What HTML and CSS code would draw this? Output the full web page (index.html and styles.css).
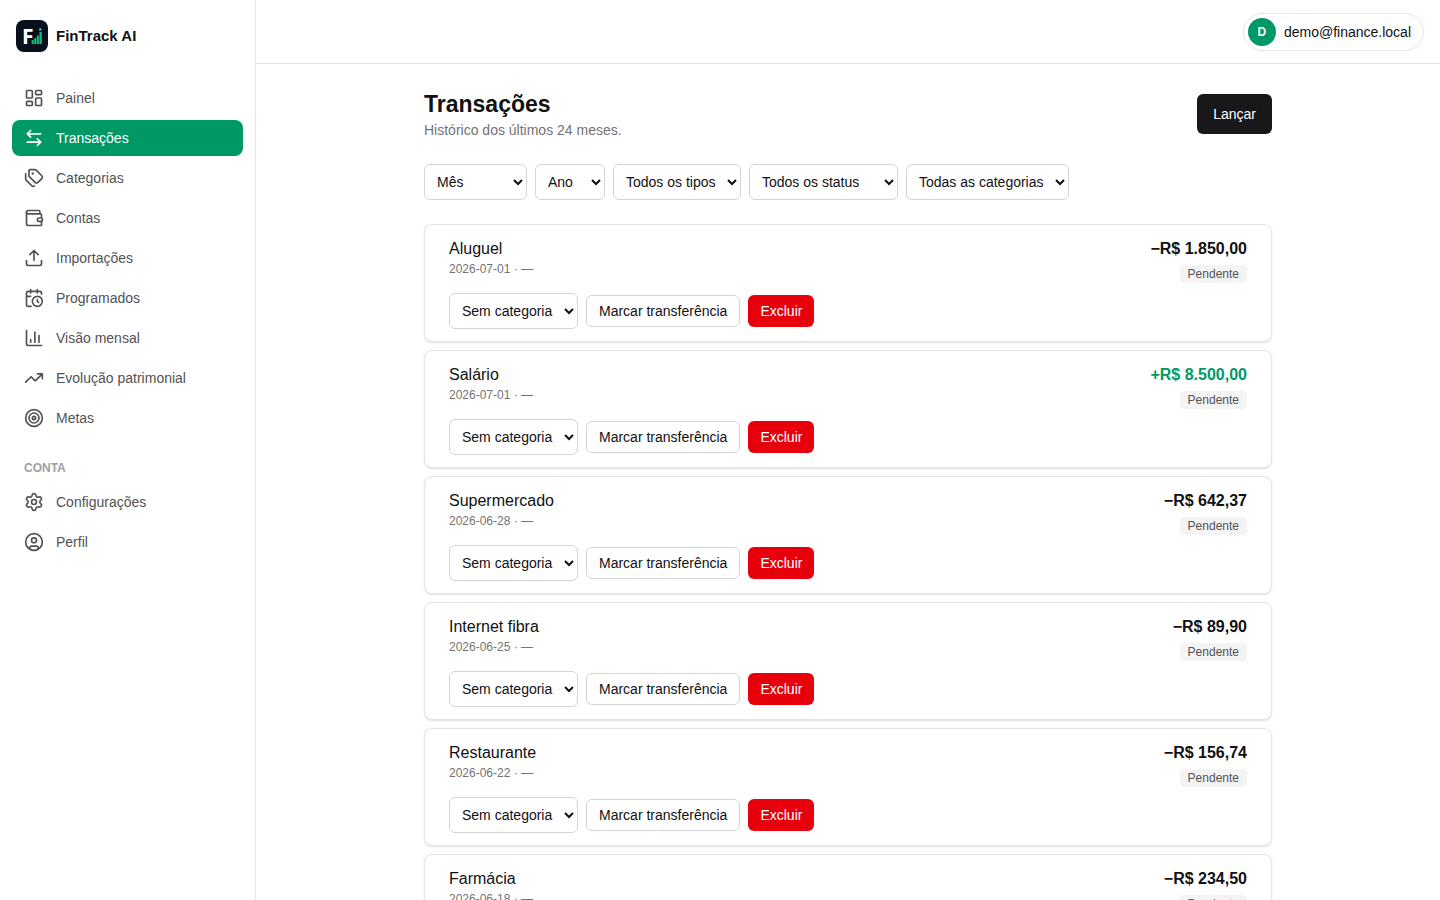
FILE: index.html
```html
<!DOCTYPE html>
<html lang="pt-BR">
<head>
<meta charset="utf-8">
<meta name="viewport" content="width=device-width, initial-scale=1">
<title>Transações · FinTrack AI</title>
<link rel="stylesheet" href="styles.css">
</head>
<body>
<div class="shell">
  <aside class="sidebar">
    <a class="brand" href="#">
      <svg class="logo" viewBox="0 0 32 32" aria-hidden="true">
        <rect width="32" height="32" rx="8" fill="#07101c"/>
        <text class="logo-letter" x="6" y="24">F</text>
        <g fill="#16b981">
          <rect x="15.600" y="20" width="2" height="4" rx=".5"/>
          <rect x="18.200" y="18" width="2.200" height="6" rx=".5"/>
          <rect x="20.900" y="15.500" width="2" height="8.500" rx=".5"/>
          <rect x="23.400" y="12" width="2.400" height="12" rx=".5"/>
          <circle cx="24.300" cy="9.500" r="1.300" fill="#3ccf9a"/>
        </g>
      </svg>
      <span>FinTrack AI</span>
    </a>
    <nav class="nav">
      <a class="nav-link" href="#"><svg class="icon" viewBox="0 0 24 24"><rect x="3" y="3" width="7" height="9" rx="1"/><rect x="14" y="3" width="7" height="5" rx="1"/><rect x="14" y="12" width="7" height="9" rx="1"/><rect x="3" y="16" width="7" height="5" rx="1"/></svg>Painel</a>
      <a class="nav-link active" href="#" aria-current="page"><svg class="icon" viewBox="0 0 24 24"><path d="M8 3 4 7l4 4M4 7h16M16 21l4-4-4-4M20 17H4"/></svg>Transações</a>
      <a class="nav-link" href="#"><svg class="icon" viewBox="0 0 24 24"><path d="M13.172 2a2 2 0 0 1 1.414.586l6.71 6.71a2.4 2.4 0 0 1 0 3.408l-4.592 4.592a2.4 2.4 0 0 1-3.408 0l-6.71-6.71A2 2 0 0 1 6 9.172V3a1 1 0 0 1 1-1z"/><path d="M2 7v6.172a2 2 0 0 0 .586 1.414l6.71 6.71a2.4 2.4 0 0 0 3.191.193"/><circle cx="10.5" cy="6.5" r=".5" fill="currentColor"/></svg>Categorias</a>
      <a class="nav-link" href="#"><svg class="icon" viewBox="0 0 24 24"><path d="M19 7V4a1 1 0 0 0-1-1H5a2 2 0 0 0 0 4h15a1 1 0 0 1 1 1v4h-3a2 2 0 0 0 0 4h3a1 1 0 0 0 1-1v-2a1 1 0 0 0-1-1"/><path d="M3 5v14a2 2 0 0 0 2 2h15a1 1 0 0 0 1-1v-4"/></svg>Contas</a>
      <a class="nav-link" href="#"><svg class="icon" viewBox="0 0 24 24"><path d="M12 3v12M17 8l-5-5-5 5M21 15v4a2 2 0 0 1-2 2H5a2 2 0 0 1-2-2v-4"/></svg>Importações</a>
      <a class="nav-link" href="#"><svg class="icon" viewBox="0 0 24 24"><path d="M16 14v2.2l1.6 1M16 2v4M21 7.5V6a2 2 0 0 0-2-2H5a2 2 0 0 0-2 2v14a2 2 0 0 0 2 2h3.5M3 10h5M8 2v4"/><circle cx="16" cy="16" r="6"/></svg>Programados</a>
      <a class="nav-link" href="#"><svg class="icon" viewBox="0 0 24 24"><path d="M3 3v16a2 2 0 0 0 2 2h16M18 17V9M13 17V5M8 17v-3"/></svg>Visão mensal</a>
      <a class="nav-link" href="#"><svg class="icon" viewBox="0 0 24 24"><path d="M16 7h6v6M22 7l-8.500 8.500-5-5L2 17"/></svg>Evolução patrimonial</a>
      <a class="nav-link" href="#"><svg class="icon" viewBox="0 0 24 24"><circle cx="12" cy="12" r="10"/><circle cx="12" cy="12" r="6"/><circle cx="12" cy="12" r="2"/></svg>Metas</a>
      <p class="nav-heading">CONTA</p>
      <a class="nav-link" href="#"><svg class="icon" viewBox="0 0 24 24"><path d="M9.671 4.136a2.34 2.34 0 0 1 4.659 0 2.34 2.34 0 0 0 3.319 1.915 2.34 2.34 0 0 1 2.33 4.033 2.34 2.34 0 0 0 0 3.831 2.34 2.34 0 0 1-2.33 4.033 2.34 2.34 0 0 0-3.319 1.915 2.34 2.34 0 0 1-4.659 0 2.34 2.34 0 0 0-3.32-1.915 2.34 2.34 0 0 1-2.33-4.033 2.34 2.34 0 0 0 0-3.831A2.34 2.34 0 0 1 6.35 6.051a2.34 2.34 0 0 0 3.319-1.915"/><circle cx="12" cy="12" r="3"/></svg>Configurações</a>
      <a class="nav-link" href="#"><svg class="icon" viewBox="0 0 24 24"><circle cx="12" cy="12" r="10"/><circle cx="12" cy="10" r="3"/><path d="M7 20.662V19a2 2 0 0 1 2-2h6a2 2 0 0 1 2 2v1.662"/></svg>Perfil</a>
    </nav>
  </aside>

  <div class="content">
    <header class="topbar">
      <button class="user" type="button"><span class="avatar">D</span>demo@finance.local</button>
    </header>
    <main class="page">
      <div class="page-head">
        <div>
          <h1 class="page-title">Transações</h1>
          <p class="page-sub">Histórico dos últimos 24 meses.</p>
        </div>
        <button class="btn btn-primary" type="button">Lançar</button>
      </div>

      <form class="filters">
        <select class="select select-month" aria-label="Mês"><option>Mês</option></select>
        <select class="select select-year" aria-label="Ano"><option>Ano</option></select>
        <select class="select" aria-label="Tipo"><option>Todos os tipos</option></select>
        <select class="select select-status" aria-label="Status"><option>Todos os status</option></select>
        <select class="select" aria-label="Categoria"><option>Todas as categorias</option></select>
      </form>

      <ul class="list">
        <li class="card">
          <div class="card-top">
            <div><p class="name">Aluguel</p><p class="meta">2026-07-01 · —</p></div>
            <div class="card-side"><p class="amount">−R$ 1.850,00</p><span class="badge">Pendente</span></div>
          </div>
          <div class="actions">
            <select class="select" aria-label="Categoria de Aluguel"><option>Sem categoria</option></select>
            <button class="btn btn-outline" type="button">Marcar transferência</button>
            <button class="btn btn-danger" type="button">Excluir</button>
          </div>
        </li>
        <li class="card">
          <div class="card-top">
            <div><p class="name">Salário</p><p class="meta">2026-07-01 · —</p></div>
            <div class="card-side"><p class="amount income">+R$ 8.500,00</p><span class="badge">Pendente</span></div>
          </div>
          <div class="actions">
            <select class="select" aria-label="Categoria de Salário"><option>Sem categoria</option></select>
            <button class="btn btn-outline" type="button">Marcar transferência</button>
            <button class="btn btn-danger" type="button">Excluir</button>
          </div>
        </li>
        <li class="card">
          <div class="card-top">
            <div><p class="name">Supermercado</p><p class="meta">2026-06-28 · —</p></div>
            <div class="card-side"><p class="amount">−R$ 642,37</p><span class="badge">Pendente</span></div>
          </div>
          <div class="actions">
            <select class="select" aria-label="Categoria de Supermercado"><option>Sem categoria</option></select>
            <button class="btn btn-outline" type="button">Marcar transferência</button>
            <button class="btn btn-danger" type="button">Excluir</button>
          </div>
        </li>
        <li class="card">
          <div class="card-top">
            <div><p class="name">Internet fibra</p><p class="meta">2026-06-25 · —</p></div>
            <div class="card-side"><p class="amount">−R$ 89,90</p><span class="badge">Pendente</span></div>
          </div>
          <div class="actions">
            <select class="select" aria-label="Categoria de Internet fibra"><option>Sem categoria</option></select>
            <button class="btn btn-outline" type="button">Marcar transferência</button>
            <button class="btn btn-danger" type="button">Excluir</button>
          </div>
        </li>
        <li class="card">
          <div class="card-top">
            <div><p class="name">Restaurante</p><p class="meta">2026-06-22 · —</p></div>
            <div class="card-side"><p class="amount">−R$ 156,74</p><span class="badge">Pendente</span></div>
          </div>
          <div class="actions">
            <select class="select" aria-label="Categoria de Restaurante"><option>Sem categoria</option></select>
            <button class="btn btn-outline" type="button">Marcar transferência</button>
            <button class="btn btn-danger" type="button">Excluir</button>
          </div>
        </li>
        <li class="card">
          <div class="card-top">
            <div><p class="name">Farmácia</p><p class="meta">2026-06-18 · —</p></div>
            <div class="card-side"><p class="amount">−R$ 234,50</p><span class="badge">Pendente</span></div>
          </div>
          <div class="actions">
            <select class="select" aria-label="Categoria de Farmácia"><option>Sem categoria</option></select>
            <button class="btn btn-outline" type="button">Marcar transferência</button>
            <button class="btn btn-danger" type="button">Excluir</button>
          </div>
        </li>
      </ul>
    </main>
  </div>
</div>
</body>
</html>
```
FILE: styles.css
```css
*, *::before, *::after { box-sizing: border-box; }

body {
  margin: 0;
  background: #fff;
  color: #111113;
  font-family: "Liberation Sans", Arial, sans-serif;
  font-size: 14px;
  line-height: 20px;
}

p, h1, ul { margin: 0; padding: 0; }
a { color: inherit; text-decoration: none; }
button, select { font: inherit; color: inherit; }
button { cursor: pointer; }

.shell { display: flex; min-height: 100vh; }

/* Sidebar */
.sidebar {
  position: sticky;
  top: 0;
  flex: none;
  width: 256px;
  height: 100vh;
  padding: 20px 12px;
  border-right: 1px solid #e4e4e4;
}
.brand {
  display: flex;
  align-items: center;
  gap: 8px;
  padding: 0 4px;
  font-size: 15px;
  font-weight: 700;
}
.logo { width: 32px; height: 32px; }
.logo-letter {
  fill: #fff;
  font-family: "Open Sans", "Noto Sans", sans-serif;
  font-size: 21px;
  font-weight: 700;
}
.nav {
  display: flex;
  flex-direction: column;
  gap: 4px;
  padding-top: 28px;
}
.nav-link {
  display: flex;
  align-items: center;
  gap: 12px;
  padding: 8px 12px;
  border-radius: 8px;
  color: #525254;
}
.nav-link.active { background: #009966; color: #fff; }
.icon {
  width: 20px;
  height: 20px;
  fill: none;
  stroke: currentColor;
  stroke-width: 2;
  stroke-linecap: round;
  stroke-linejoin: round;
}
.nav-heading {
  padding: 20px 12px 4px;
  color: #a1a1a1;
  font-size: 12px;
  font-weight: 700;
  line-height: 16px;
}

/* Top bar */
.content { flex: 1; min-width: 0; }
.topbar {
  position: sticky;
  top: 0;
  z-index: 1;
  display: flex;
  align-items: center;
  justify-content: flex-end;
  height: 64px;
  padding: 0 16px;
  background: #fff;
  border-bottom: 1px solid #e4e4e4;
}
.user {
  display: flex;
  align-items: center;
  gap: 8px;
  padding: 4px 12px 4px 4px;
  border: 1px solid #e8e8e8;
  border-radius: 20px;
  background: #fff;
}
.avatar {
  display: grid;
  place-items: center;
  width: 28px;
  height: 28px;
  border-radius: 50%;
  background: #009966;
  color: #fff;
  font-size: 12px;
  font-weight: 700;
}

/* Page */
.page {
  display: flex;
  flex-direction: column;
  gap: 24px;
  max-width: 896px;
  margin: 0 auto;
  padding: 24px;
}
.page-head { display: flex; align-items: center; justify-content: space-between; }
.page-title { font-size: 23px; font-weight: 700; line-height: 32px; }
.page-sub { color: #737375; }
.filters, .actions { display: flex; flex-wrap: wrap; align-items: center; gap: 8px; }

.select {
  height: 36px;
  padding: 0 8px;
  border: 1px solid #d4d4d4;
  border-radius: 6px;
  background: #fff;
}
.select-month { width: 103px; }
.select-year { width: 70px; }
.select-status { width: 149px; }

.btn {
  height: 32px;
  padding: 0 12px;
  border: 0;
  border-radius: 6px;
}
.btn-primary { height: 40px; padding: 0 16px; background: #18181b; color: #fff; }
.btn-outline { border: 1px solid #d4d4d4; background: #fff; }
.btn-danger { background: #e7000b; color: #fff; }

/* Transactions */
.list { display: flex; flex-direction: column; gap: 8px; list-style: none; }
.card {
  display: flex;
  flex-direction: column;
  gap: 8px;
  padding: 12px 24px;
  border: 1px solid #e4e4e4;
  border-radius: 8px;
  background: #fff;
  box-shadow: 0 1px 2px rgba(0, 0, 0, .12);
}
.card-top { display: flex; justify-content: space-between; height: 48px; }
.name { font-size: 16px; line-height: 24px; }
.meta { color: #737375; font-size: 12px; line-height: 16px; }
.card-side { display: flex; flex-direction: column; align-items: flex-end; gap: 4px; }
.amount { font-size: 16px; font-weight: 700; line-height: 24px; }
.income { color: #009966; }
.badge {
  padding: 1px 8px;
  border-radius: 4px;
  background: #f4f4f5;
  color: #525254;
  font-size: 12px;
  line-height: 16px;
}
```
